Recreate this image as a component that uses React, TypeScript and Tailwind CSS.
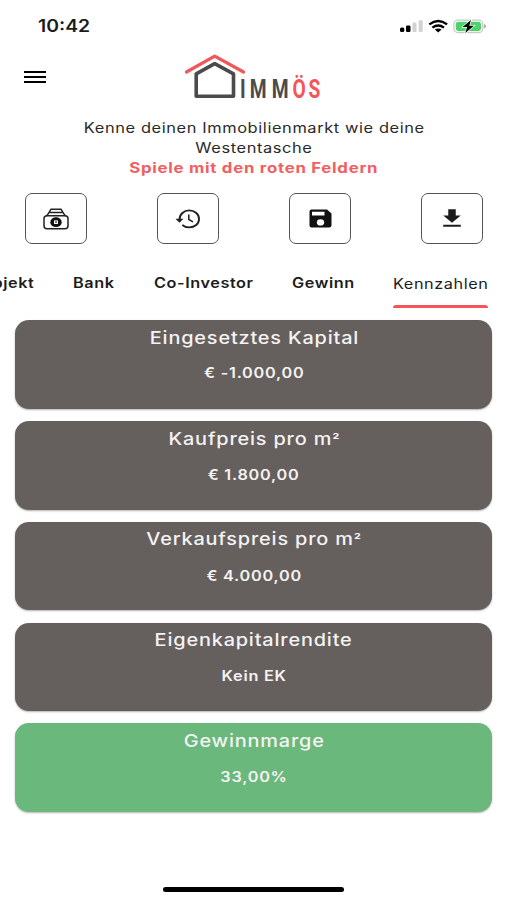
import { MdDownload } from 'react-icons/md';

const tabs = [
  { label: 'Bank', box: 'ml-[39px] w-[42px]' },
  { label: 'Co-Investor', box: 'ml-[39px] w-[99px]' },
  { label: 'Gewinn', box: 'ml-[39px] w-[63px]' },
];

const metrics = [
  { title: 'Eingesetztes Kapital', value: '€ -1.000,00', color: 'bg-[#655f5e]' },
  { title: 'Kaufpreis pro m²', value: '€ 1.800,00', color: 'bg-[#655f5e]' },
  { title: 'Verkaufspreis pro m²', value: '€ 4.000,00', color: 'bg-[#655f5e]' },
  { title: 'Eigenkapitalrendite', value: 'Kein EK', color: 'bg-[#655f5e]' },
  { title: 'Gewinnmarge', value: '33,00%', color: 'bg-[#6ab87b]' },
];

function StatusBar() {
  return (
    <div className="flex h-[51px] items-center justify-between pl-[38px] pr-[20px]">
      <span className="origin-left scale-x-[1.14] text-[17px] font-semibold leading-5">10:42</span>
      <svg width="88" height="18" viewBox="0 0 88 18">
        <rect x="1" y="10.5" width="4.3" height="4.5" rx="1.5" fill="#000" />
        <rect x="7" y="8.5" width="4.5" height="6.5" rx="1.2" fill="#000" />
        <rect x="13.5" y="5.5" width="4" height="9.5" rx="1.2" fill="#d2d2d2" />
        <rect x="19.7" y="3.2" width="4" height="11.8" rx="1.2" fill="#d2d2d2" />
        <g fill="none" stroke="#000" strokeWidth="2.4">
          <path d="M30.3 7.4Q39.2 .8 48.1 7.4" />
          <path d="M33.4 10.6Q39.2 6.2 45 10.6" />
        </g>
        <path d="M35.8 12.6Q39.2 10.2 42.6 12.6L39.2 15.4Z" />
        <rect x="54.9" y="3.2" width="29" height="12.3" rx="4" fill="#fff" stroke="#c9c9c9" strokeWidth="1.3" />
        <rect x="56.8" y="4.8" width="25.2" height="9.1" rx="2.4" fill="#4bd467" />
        <path d="M85 7v4.5q2.2-.6 2.2-2.25t-2.2-2.25" fill="#b5b5b5" />
        <path d="M72 3L63.5 10h4.6L66.3 16L75 8.7h-4.7Z" stroke="#fff" strokeWidth="1.4" paintOrder="stroke" />
      </svg>
    </div>
  );
}

function Logo() {
  return (
    <svg width="140" height="56" viewBox="0 0 140 56" fill="none">
      <path d="M2.5 21L30.7 5.2L59.5 21" stroke="#f45559" strokeWidth="3.2" strokeLinecap="round" strokeLinejoin="round" />
      <path d="M12.2 22.8L30.7 12.7L49.5 22.8V45.3H12.2Z" stroke="#4b4b4b" strokeWidth="3.6" strokeLinejoin="round" />
      <g fontFamily="Roboto, sans-serif" fontSize="26" fontWeight="700" transform="translate(56 46.5) scale(.74 1)">
        <text x="0 13.2 43" y="0" fill="#4b4b4b">IMM</text>
        <text x="71 92.5" y="0" fill="#f45559">ÖS</text>
      </g>
    </svg>
  );
}

function CameraIcon() {
  return (
    <svg width="26" height="22" viewBox="0 0 26 22" fill="none" stroke="#222" strokeWidth="1.5" strokeLinejoin="round">
      <path d="M6 4.6L8 1.2H18L20 4.6" />
      <path d="M3.5 8L6 4.6H20L22.5 8" />
      <rect x="1" y="7.7" width="24" height="13" rx="3" />
      <ellipse cx="13" cy="14.2" rx="5.7" ry="4.9" fill="#111" stroke="none" />
      <rect x="11" y="12.4" width="4" height="3.6" fill="#fff" stroke="none" />
      <path d="M12 13.2l2 1.8M14 13.2l-2 1.8" strokeWidth=".6" />
    </svg>
  );
}

function HistoryIcon() {
  return (
    <svg width="26" height="20" viewBox="0 0 26 20" fill="none" stroke="#202020" strokeWidth="1.9">
      <path d="M4.5 10.5C4.5 5.2 9 1.4 14.2 1.4S24 5 24 10S19.8 18.4 14.2 18.4C11.7 18.4 9.2 17.5 7.3 15.9" />
      <path d="M.5 9.8h8L4.4 13.8Z" fill="#202020" stroke="none" />
      <path d="M13.8 5.5V10.5L18 12.8" strokeWidth="1.5" />
    </svg>
  );
}

function SaveIcon() {
  return (
    <svg width="23" height="19" viewBox="0 0 23 19">
      <path fill="#111" fillRule="evenodd" d="M2.5.5H18L22.5 4.5V16.5Q22.5 18.5 20 18.5H2.5Q.5 18.5 .5 16.5V2.5Q.5.5 2.5.5ZM3 2.8V6.5H15.5V2.8ZM11.5 10.3A3.7 3.1 0 1 0 11.5 16.5A3.7 3.1 0 1 0 11.5 10.3Z" />
    </svg>
  );
}

export default function App() {
  const actions = [
    <CameraIcon />,
    <HistoryIcon />,
    <SaveIcon />,
    <MdDownload className="h-[25px] w-[30px]" preserveAspectRatio="none" />,
  ];

  return (
    <div className="flex h-[900px] w-[507px] flex-col overflow-hidden bg-white font-['Inter',sans-serif] text-[#1c1c1c]">
      <StatusBar />

      <header className="flex h-[67px] items-start">
        <button className="ml-[24px] mt-[20px] flex h-[12px] w-[22px] flex-col justify-between">
          <span className="h-[2px] w-full bg-black" />
          <span className="h-[2px] w-full bg-black" />
          <span className="h-[2px] w-full bg-black" />
        </button>
        <div className="ml-[138px]">
          <Logo />
        </div>
      </header>

      <div className="flex flex-col items-center pl-px text-[14px] leading-5">
        <p className="scale-x-[1.173] whitespace-nowrap tracking-[0.5px] text-[#2a2a2a]">Kenne deinen Immobilienmarkt wie deine</p>
        <p className="scale-x-[1.173] tracking-[0.5px] text-[#2a2a2a]">Westentasche</p>
        <p className="scale-x-[1.2] font-bold tracking-[0.6px] text-[#f45d60]">Spiele mit den roten Feldern</p>
      </div>

      <div className="mt-[15px] flex justify-between pl-[25px] pr-[24px]">
        {actions.map((icon, i) => (
          <button key={i} className="flex h-[51px] w-[62px] items-center justify-center rounded-[7px] border-[1.5px] border-[#555]">
            {icon}
          </button>
        ))}
      </div>

      <nav className="mt-[29px] flex h-[47.2px] whitespace-nowrap text-[14px] font-semibold leading-5 tracking-[0.5px]">
        <div className="flex w-[34px] justify-end">
          <span className="origin-right scale-x-[1.16]">Objekt</span>
        </div>
        {tabs.map((tab) => (
          <div key={tab.label} className={tab.box}>
            <span className="inline-block origin-left scale-x-[1.16]">{tab.label}</span>
          </div>
        ))}
        <div className="ml-[38px] mt-px flex h-[34px] w-[95px] flex-col justify-between font-normal">
          <span className="origin-left scale-x-[1.16]">Kennzahlen</span>
          <span className="h-[3px] w-full rounded-t-[3px] bg-[#f45559]" />
        </div>
      </nav>

      <main className="mx-[15px] flex flex-col gap-[12.2px]">
        {metrics.map((metric) => (
          <section
            key={metric.title}
            className={`flex h-[88.6px] flex-col items-center rounded-[14px] pl-px text-[#f5f3f3] shadow-[0_1px_2px_rgba(0,0,0,0.3)] ${metric.color}`}
          >
            <h2 className="mt-[5.7px] scale-x-[1.17] text-[17px] font-medium leading-6 tracking-[0.7px]">
              {metric.title.replace('²', '')}
              {metric.title.endsWith('²') && <span className="text-[14px]">²</span>}
            </h2>
            <p className="mt-[13.6px] scale-x-[1.16] text-[14px] font-semibold leading-5 tracking-[0.65px]">{metric.value}</p>
          </section>
        ))}
      </main>

      <div className="mx-auto mb-[8px] mt-auto h-[5px] w-[181px] rounded-full bg-black" />
    </div>
  );
}
